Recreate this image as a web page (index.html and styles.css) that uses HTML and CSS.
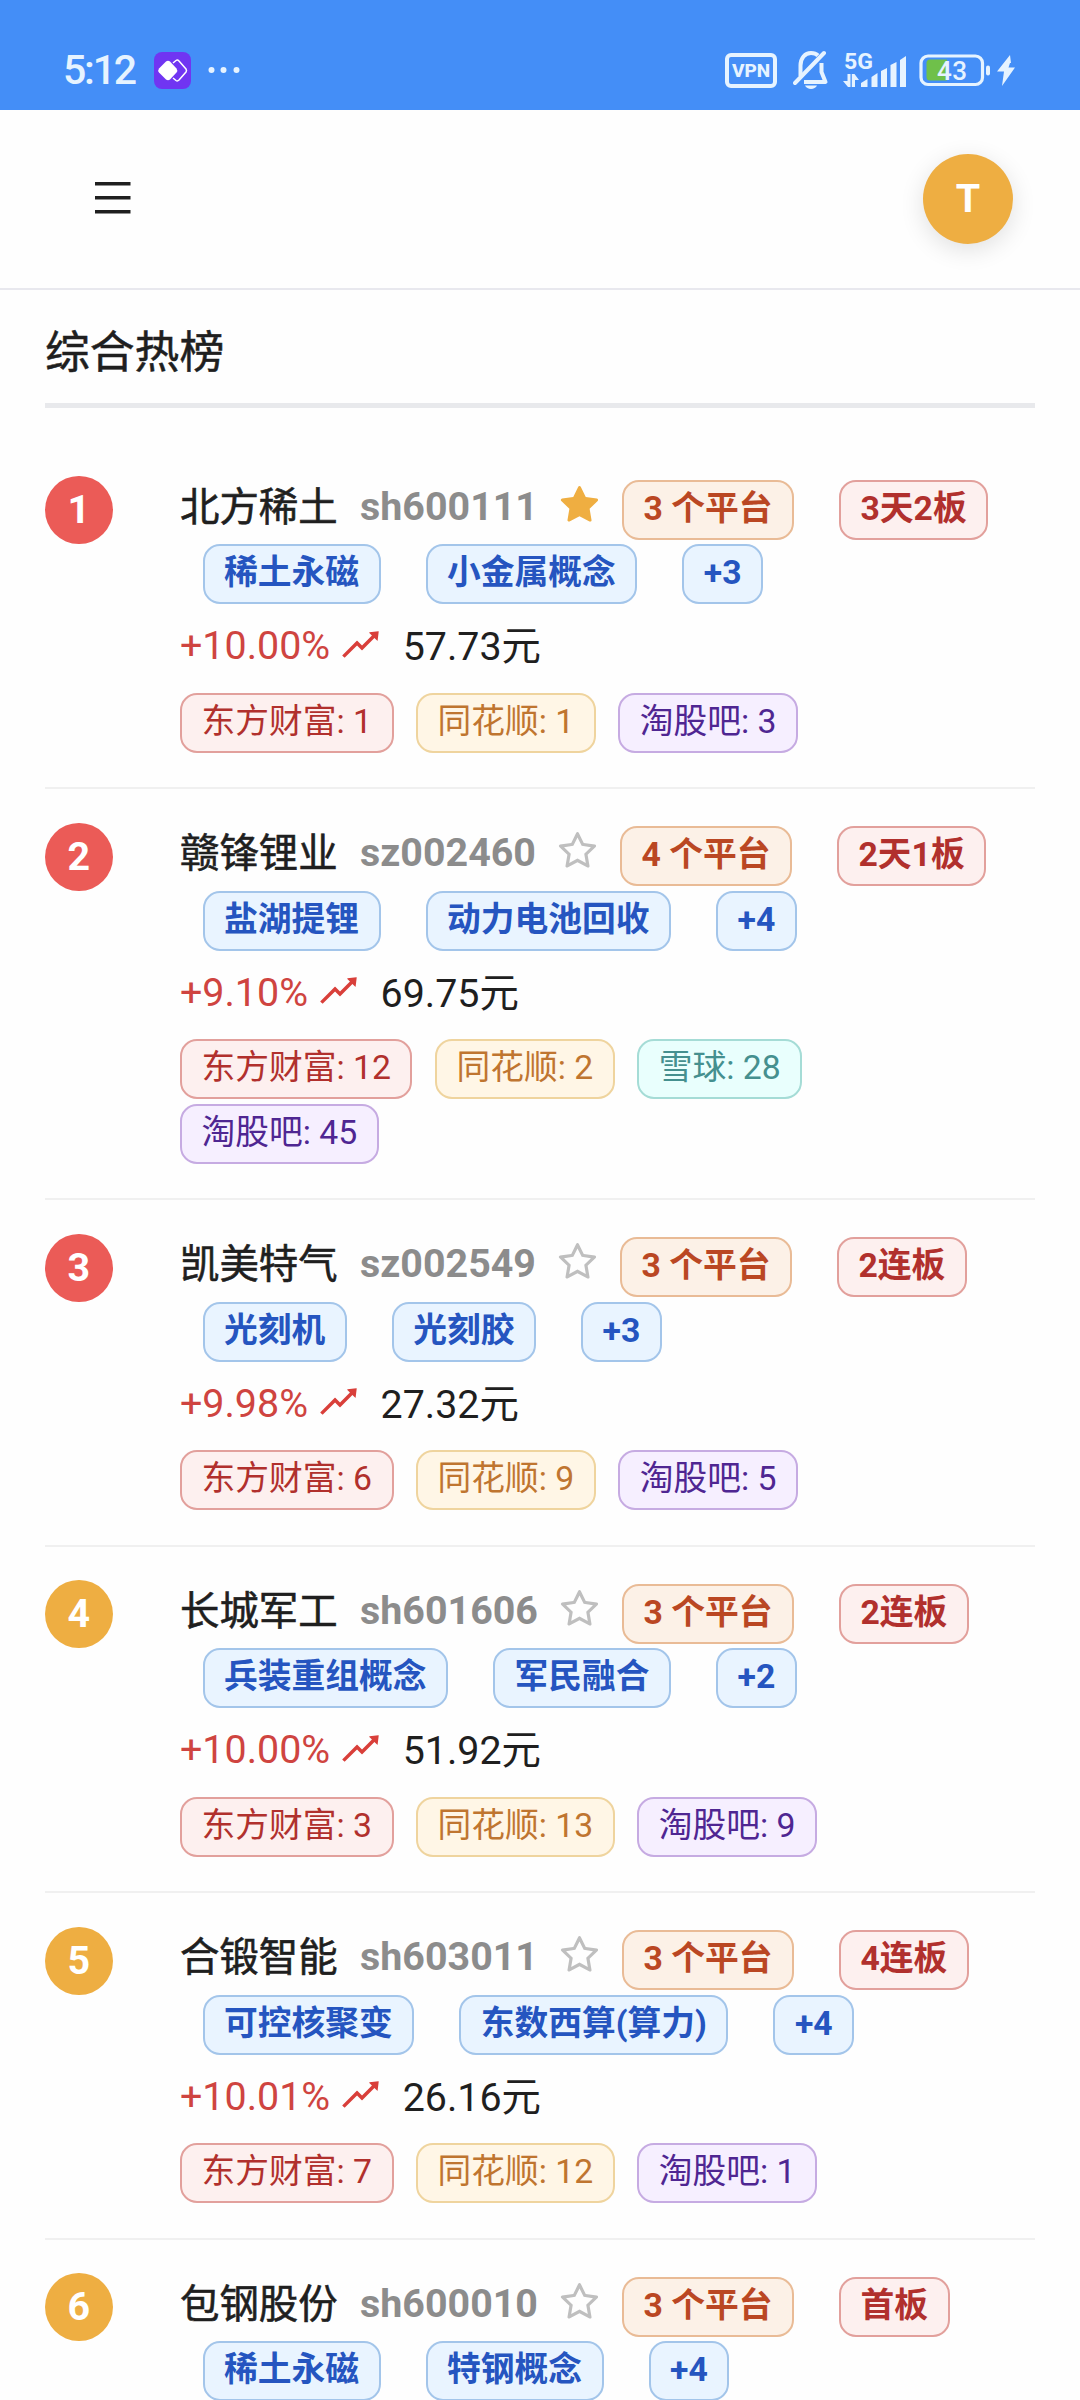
FILE: index.html
```
<!DOCTYPE html>
<html lang="zh-CN">
  <head>
    <meta charset="utf-8">
    <title>综合热榜</title>
    <link rel="stylesheet" href="styles.css">
  </head>
  <body>
    <!-- shared icons -->
    <svg class="sprite" width="0" height="0">
      <symbol id="star" viewBox="0 0 1024 1024">
        <path d="M908.1 353.1l-253.9-36.9L540.7 86.1c-3.1-6.3-8.2-11.4-14.5-14.5-15.8-7.8-35-1.3-42.9 14.5L369.8 316.2l-253.9 36.9c-7 1-13.4 4.3-18.3 9.3a32.05 32.05 0 00.6 45.3l183.7 179.1-43.4 252.9a31.95 31.95 0 0046.4 33.7L512 754l227.1 119.4c6.2 3.3 13.4 4.4 20.3 3.2 17.4-3 29.1-19.5 26.1-36.9l-43.4-252.9 183.7-179.1c5-4.9 8.3-11.3 9.3-18.3 2.7-17.5-9.5-33.7-27-36.3zM664.8 561.6l36.1 210.3L512 672.7 323.1 772l36.1-210.3-152.8-149L417.6 382 512 190.7 606.4 382l211.2 30.7-152.8 148.9z"/>
      </symbol>
      <symbol id="star-filled" viewBox="0 0 1024 1024">
        <path d="M908.1 353.1l-253.9-36.9L540.7 86.1c-3.1-6.3-8.2-11.4-14.5-14.5-15.8-7.8-35-1.3-42.9 14.5L369.8 316.2l-253.9 36.9c-7 1-13.4 4.3-18.3 9.3a32.05 32.05 0 00.6 45.3l183.7 179.1-43.4 252.9a31.95 31.95 0 0046.4 33.7L512 754l227.1 119.4c6.2 3.3 13.4 4.4 20.3 3.2 17.4-3 29.1-19.5 26.1-36.9l-43.4-252.9 183.7-179.1c5-4.9 8.3-11.3 9.3-18.3 2.7-17.5-9.5-33.7-27-36.3z"/>
      </symbol>
      <symbol id="rise" viewBox="0 0 1024 1024">
        <path d="M917 211.1l-199.2 24c-6.6.8-9.4 8.9-4.7 13.6l59.3 59.3-226 226-101.8-101.7c-6.3-6.3-16.4-6.2-22.6 0L100.3 754.1a8.03 8.03 0 000 11.3l45 45.2c3.1 3.1 8.2 3.1 11.3 0L433.3 534 535 635.7c6.3 6.2 16.4 6.2 22.6 0L829 364.5l59.3 59.3a8.01 8.01 0 0013.6-4.7l24-199.2c.7-5.1-3.7-9.5-8.9-8.8z"/>
      </symbol>
    </svg>

    <div class="statusbar">
      <div class="status-left">
        <span class="clock">5:12</span>
        <svg class="app-icon" width="37" height="37" viewBox="0 0 37 37">
          <rect width="37" height="37" rx="8" fill="#7035f2"/>
          <path d="M19 11L22 8.500Q23.500 7.500 25 9L32 17Q33 18.500 32 20L25 28Q23.500 29.500 22 28.500L19 26" fill="none" stroke="#fff" stroke-width="1.500"/>
          <path d="M12 9.500Q14 8 16 9.500L22.500 16.500Q24 18.500 22.500 20.500L16 27.500Q14 29 12 27.500L5 20.500Q3.500 18.500 5 16.500Z" fill="#fff"/>
        </svg>
        <svg class="more" width="32" height="8" viewBox="0 0 32 8">
          <circle cx="3.500" cy="4" r="3"/>
          <circle cx="15.500" cy="4" r="3"/>
          <circle cx="28.500" cy="4" r="3"/>
        </svg>
      </div>
      <div class="status-right">
        <span class="vpn">VPN</span>
        <svg class="bell" width="36" height="40" viewBox="0 0 36 40">
          <path d="M7.500 26V15.500C7.500 8 12 3 18 3C21 3 23.500 4 25 5.500M28.500 13V22L32.500 32H11" fill="none" stroke="#e6f3ff" stroke-width="4" stroke-linejoin="round"/>
          <path d="M2 33L31 3" stroke="#e6f3ff" stroke-width="4" stroke-linecap="round"/>
          <path d="M12 35.500H24C22 40 14 40 12 35.500Z" fill="#e6f3ff"/>
        </svg>
        <svg class="signal" width="64" height="52" viewBox="0 -8 64 52">
          <text x="1" y="16.500" font-size="22.500" font-weight="700" textLength="29" lengthAdjust="spacingAndGlyphs">5G</text>
          <path d="M4.500 22H7.500V35H5L0 29H4.500ZM8.800 35V22H11.500L16 28H12V35Z"/>
          <path d="M18 35V31L24.500 27V35ZM28.500 35V25L34.500 21V35ZM38 35V19L44 16V35ZM47.500 35V13L53.500 10V35ZM57 35V8L63 4V35Z"/>
        </svg>
        <svg class="battery" width="98" height="34" viewBox="0 0 98 34">
          <rect x="2" y="3" width="61.500" height="28.500" rx="7" fill="none" stroke="#e6f3ff" stroke-width="3.200"/>
          <path d="M11 6.500H28V27.500H11Q7.500 27.500 7.500 24V10Q7.500 6.500 11 6.500Z" fill="#6fc04a"/>
          <text x="18" y="27" font-size="26" font-weight="500" textLength="30">43</text>
          <rect x="67" y="12.500" width="4" height="10" rx="2"/>
          <path d="M91 2L78 18.500H85L83 33L96 14.500H89.500L91 10H97L92 10Z" />
        </svg>
      </div>
    </div>

    <header class="header">
      <svg class="menu" width="36" height="32" viewBox="0 0 36 32">
        <path d="M0 0H35.500V3.500H0ZM0 14H35.500V17.500H0ZM0 28H35.500V31.500H0Z"/>
      </svg>
      <div class="avatar">T</div>
    </header>

    <main class="content">
      <h1 class="title">综合热榜</h1>

      <div class="item">
        <div class="rank top">1</div>
        <div class="info">
          <div class="line">
            <span class="name">北方稀土</span><span class="code">sh600111</span>
            <svg class="star on"><use href="#star-filled"/></svg>
            <span class="tag orange">3 个平台</span><span class="tag red bold">3天2板</span>
          </div>
          <div class="line concepts">
            <span class="tag blue">稀土永磁</span><span class="tag blue">小金属概念</span><span class="tag blue">+3</span>
          </div>
          <div class="price">
            <span class="change">+10.00%</span><svg class="rise"><use href="#rise"/></svg><span class="value">57.73元</span>
          </div>
          <div class="line platforms">
            <span class="tag red">东方财富: 1</span><span class="tag gold">同花顺: 1</span><span class="tag purple">淘股吧: 3</span>
          </div>
        </div>
      </div>

      <div class="item">
        <div class="rank top">2</div>
        <div class="info">
          <div class="line">
            <span class="name">赣锋锂业</span><span class="code">sz002460</span>
            <svg class="star"><use href="#star"/></svg>
            <span class="tag orange">4 个平台</span><span class="tag red bold">2天1板</span>
          </div>
          <div class="line concepts">
            <span class="tag blue">盐湖提锂</span><span class="tag blue">动力电池回收</span><span class="tag blue">+4</span>
          </div>
          <div class="price">
            <span class="change">+9.10%</span><svg class="rise"><use href="#rise"/></svg><span class="value">69.75元</span>
          </div>
          <div class="line platforms">
            <span class="tag red">东方财富: 12</span><span class="tag gold">同花顺: 2</span><span class="tag cyan">雪球: 28</span>
          </div>
          <div class="line platforms">
            <span class="tag purple">淘股吧: 45</span>
          </div>
        </div>
      </div>

      <div class="item">
        <div class="rank top">3</div>
        <div class="info">
          <div class="line">
            <span class="name">凯美特气</span><span class="code">sz002549</span>
            <svg class="star"><use href="#star"/></svg>
            <span class="tag orange">3 个平台</span><span class="tag red bold">2连板</span>
          </div>
          <div class="line concepts">
            <span class="tag blue">光刻机</span><span class="tag blue">光刻胶</span><span class="tag blue">+3</span>
          </div>
          <div class="price">
            <span class="change">+9.98%</span><svg class="rise"><use href="#rise"/></svg><span class="value">27.32元</span>
          </div>
          <div class="line platforms">
            <span class="tag red">东方财富: 6</span><span class="tag gold">同花顺: 9</span><span class="tag purple">淘股吧: 5</span>
          </div>
        </div>
      </div>

      <div class="item">
        <div class="rank">4</div>
        <div class="info">
          <div class="line">
            <span class="name">长城军工</span><span class="code">sh601606</span>
            <svg class="star"><use href="#star"/></svg>
            <span class="tag orange">3 个平台</span><span class="tag red bold">2连板</span>
          </div>
          <div class="line concepts">
            <span class="tag blue">兵装重组概念</span><span class="tag blue">军民融合</span><span class="tag blue">+2</span>
          </div>
          <div class="price">
            <span class="change">+10.00%</span><svg class="rise"><use href="#rise"/></svg><span class="value">51.92元</span>
          </div>
          <div class="line platforms">
            <span class="tag red">东方财富: 3</span><span class="tag gold">同花顺: 13</span><span class="tag purple">淘股吧: 9</span>
          </div>
        </div>
      </div>

      <div class="item">
        <div class="rank">5</div>
        <div class="info">
          <div class="line">
            <span class="name">合锻智能</span><span class="code">sh603011</span>
            <svg class="star"><use href="#star"/></svg>
            <span class="tag orange">3 个平台</span><span class="tag red bold">4连板</span>
          </div>
          <div class="line concepts">
            <span class="tag blue">可控核聚变</span><span class="tag blue">东数西算(算力)</span><span class="tag blue">+4</span>
          </div>
          <div class="price">
            <span class="change">+10.01%</span><svg class="rise"><use href="#rise"/></svg><span class="value">26.16元</span>
          </div>
          <div class="line platforms">
            <span class="tag red">东方财富: 7</span><span class="tag gold">同花顺: 12</span><span class="tag purple">淘股吧: 1</span>
          </div>
        </div>
      </div>

      <div class="item">
        <div class="rank">6</div>
        <div class="info">
          <div class="line">
            <span class="name">包钢股份</span><span class="code">sh600010</span>
            <svg class="star"><use href="#star"/></svg>
            <span class="tag orange">3 个平台</span><span class="tag red bold">首板</span>
          </div>
          <div class="line concepts">
            <span class="tag blue">稀土永磁</span><span class="tag blue">特钢概念</span><span class="tag blue">+4</span>
          </div>
        </div>
      </div>
    </main>
  </body>
</html>
```
FILE: styles.css
```
* {
  box-sizing: border-box;
}

body {
  margin: 0;
  height: 2400px;
  overflow: hidden;
  background: #fefefe;
  color: #1f1f1f;
  font-family: Roboto, "Noto Sans CJK SC", sans-serif;
  font-size: 39.4px;
}

svg {
  display: block;
  flex: none;
}

.sprite {
  position: absolute;
}

/* status bar */
.statusbar {
  display: flex;
  justify-content: space-between;
  height: 110px;
  padding: 30px 63px 0 63px;
  background: #448ef7;
  color: #e6f3ff;
  fill: #e6f3ff;
}

.status-left,
.status-right {
  display: flex;
  align-items: center;
  height: 80px;
}

.clock {
  width: 91px;
  font-size: 41px;
  font-weight: 500;
  letter-spacing: -2.2px;
}

.more {
  margin-left: 17px;
}

.vpn {
  width: 52px;
  height: 35px;
  margin-right: 16px;
  border: 4px solid #e6f3ff;
  border-radius: 6px;
  font-size: 19px;
  font-weight: 800;
  line-height: 27px;
  text-align: center;
}

.signal {
  margin: 0 12px 0 14px;
}

/* header */
.header {
  display: flex;
  align-items: center;
  justify-content: space-between;
  height: 180px;
  padding: 0 67px 0 95px;
  border-bottom: 2px solid #e8e8ee;
}

.menu {
  margin-bottom: 3px;
  fill: #1f1f1f;
}

.avatar {
  width: 90px;
  height: 90px;
  border-radius: 50%;
  background: #eeae42;
  box-shadow: 0 6px 24px rgba(0, 0, 0, 0.12);
  color: #fff;
  font-weight: 700;
  line-height: 90px;
  text-align: center;
}

/* list */
.content {
  padding: 0 45px;
}

.title {
  height: 118px;
  margin: 0 0 34.5px;
  border-bottom: 5px solid #e8e9ec;
  font-size: 44.8px;
  font-weight: 400;
  line-height: 126px;
  -webkit-text-stroke: 0.5px;
}

.item {
  display: flex;
  gap: 67.5px;
  padding: 33.5px 0;
  border-bottom: 2px solid #f0f0f0;
}

.rank {
  flex: none;
  width: 67.5px;
  height: 68px;
  border-radius: 50%;
  background: #eeae42;
  color: #fff;
  font-weight: 700;
  line-height: 67px;
  text-align: center;
}

.rank.top {
  background: #eb5b57;
}

.info {
  padding-top: 1.7px;
  margin-bottom: -1.7px;
}

.line {
  display: flex;
  align-items: center;
  height: 64.5px;
  white-space: nowrap;
}

.name {
  margin-right: 22.5px;
  padding-bottom: 13px;
  -webkit-text-stroke: 0.6px;
}

.code {
  margin-right: 19px;
  padding-bottom: 7px;
  color: #8c8c8c;
  font-weight: 700;
}

.star {
  width: 45px;
  height: 45px;
  margin: 0 20px 9px 0;
  fill: #bfbfbf;
}

.star.on {
  fill: #efae41;
}

.tag {
  height: 60px;
  padding: 0 19.5px;
  margin-right: 45px;
  border: 2px solid;
  border-radius: 17px;
  font-size: 33.75px;
  line-height: 53.5px;
}

.concepts {
  padding-left: 22.5px;
}

.platforms .tag {
  margin-right: 22.5px;
}

.orange,
.blue,
.bold {
  font-weight: 700;
}

.orange {
  border-color: #e9bb96;
  background: #fcf1e7;
  color: #ba4723;
}

.red {
  border-color: #e2a09c;
  background: #fdf0ef;
  color: #b1302d;
}

.blue {
  border-color: #a3c5ea;
  background: #e9f4ff;
  color: #2555c0;
}

.gold {
  border-color: #efd49e;
  background: #fff6e6;
  color: #bf7530;
}

.cyan {
  border-color: #a5dcd6;
  background: #e9fffd;
  color: #45908f;
}

.purple {
  border-color: #c6abe2;
  background: #f6efff;
  color: #4f2692;
}

.price {
  display: flex;
  align-items: center;
  height: 84px;
  padding-bottom: 6px;
}

.change {
  color: #cf4440;
}

.value {
  padding-bottom: 6px;
}

.rise {
  width: 45px;
  height: 45px;
  margin: 0 20px 3px 7.5px;
  fill: #d93f3a;
}
```
